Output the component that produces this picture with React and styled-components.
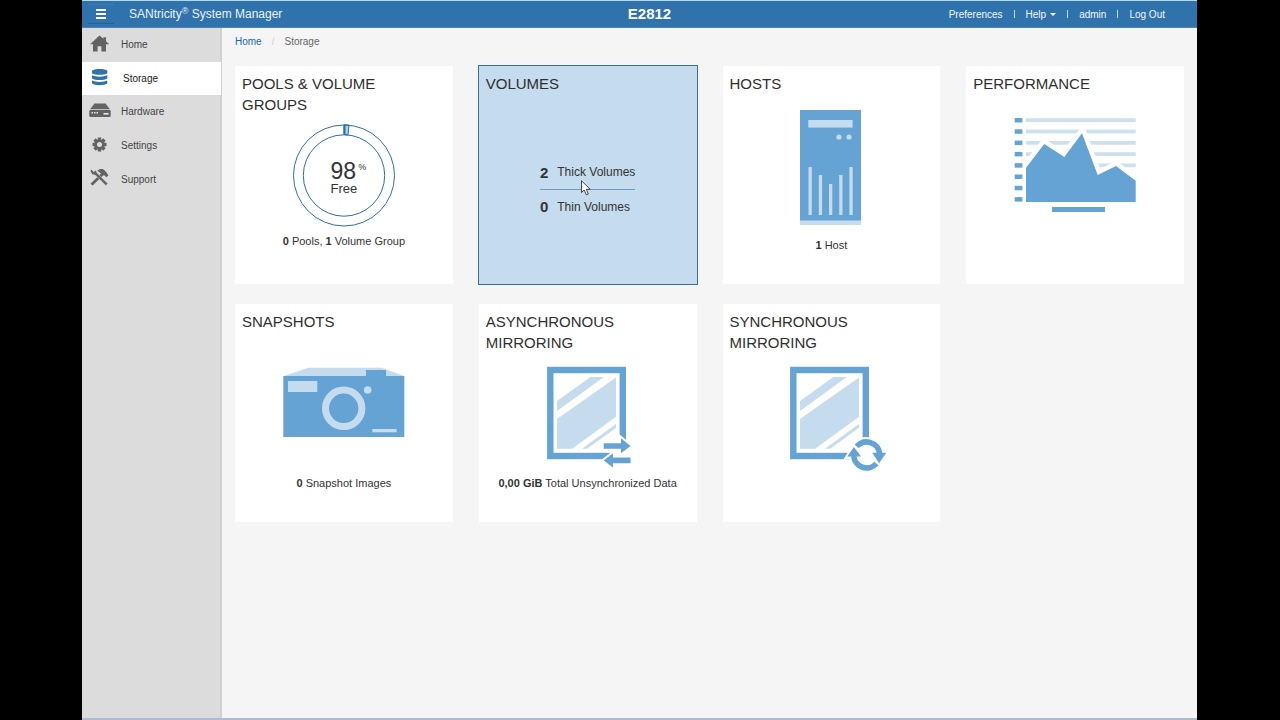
import React from "react";
import styled, { createGlobalStyle, css } from "styled-components";

const color = {
  header: "#3072ac",
  headerEdge: "#b4d8f0",
  side: "#dcdcdc",
  sideEdge: "#d0d0d0",
  page: "#f5f5f5",
  text: "#333333",
  icon: "#636363",
  link: "#2163b8",
  art: "#64a3d4",
  pale: "#c5dbee",
  line: "#2f6f9f",
};

const GlobalStyle = createGlobalStyle`
  *, *::before, *::after { box-sizing: border-box; }
  body {
    margin: 0;
    background: #000;
    color: ${color.text};
    font-family: "Liberation Sans", Arial, sans-serif;
    font-size: 11px;
  }
`;

const Shell = styled.div`
  min-height: 100vh;
  margin: 0 83px 0 82px;
  display: flex;
  flex-direction: column;
  background: ${color.page};
  border-bottom: 2px solid #a9bdd3;
`;

const Header = styled.header`
  height: 28px;
  display: grid;
  grid-template-columns: 1fr auto 1fr;
  align-items: center;
  background: ${color.header};
  border-top: 1px solid ${color.headerEdge};
  border-bottom: 1px solid #4a83b5;
  color: #fff;
`;

const Brand = styled.div`
  display: flex;
  align-items: center;
  gap: 15px;
  padding-left: 6px;
  font-size: 12px;
  white-space: nowrap;
  color: #eaf3fb;

  sup {
    font-size: 9px;
    line-height: 0;
    vertical-align: 4px;
  }
`;

const MenuButton = styled.button`
  width: 26px;
  height: 20px;
  padding: 0;
  display: grid;
  place-items: center;
  background: none;
  border: 0;
  border-top: 1px solid #3c7cb4;
  border-bottom: 1px solid #255f95;
`;

const SystemName = styled.h1`
  margin: 0;
  padding-left: 20px;
  font-size: 15px;
  line-height: 20px;
`;

const UserNav = styled.nav`
  display: flex;
  justify-content: flex-end;
  align-items: center;
  gap: 11px;
  padding-right: 32px;
`;

const headerItem = css`
  padding: 0;
  border: 0;
  background: none;
  font: inherit;
  font-size: 10px;
  color: #f0f7fd;
  text-decoration: none;
  white-space: nowrap;
`;

const HeaderLink = styled.a`
  ${headerItem}
`;

const HeaderButton = styled.button`
  ${headerItem}
  display: flex;
  align-items: center;
  gap: 4px;
`;

const Divider = styled.span`
  width: 1px;
  height: 8px;
  background: #c3dbf0;
`;

const Body = styled.div`
  flex: 1;
  display: flex;
`;

const Sidebar = styled.aside`
  flex: 0 0 140px;
  background: ${color.side};
  border-right: 2px solid ${color.sideEdge};
`;

const SideNav = styled.nav`
  height: 168px;
  margin-right: -1px;
  display: grid;
  grid-template-rows: repeat(5, 1fr);
`;

const SideLink = styled.a`
  display: flex;
  align-items: center;
  gap: ${(p) => (p.$active ? 12 : 10)}px;
  padding-left: 7px;
  font-size: 10px;
  text-decoration: none;
  color: ${(p) => (p.$active ? "#222" : "#444")};
  background: ${(p) => (p.$active ? "#fff" : "none")};

  svg {
    color: ${(p) => (p.$active ? color.header : color.icon)};
  }
`;

const Main = styled.main`
  flex: 1;
  min-width: 0;
  padding: 0 13px;
`;

const Crumbs = styled.nav`
  height: 38px;
  padding-bottom: 11px;
  display: flex;
  align-items: center;
  gap: 10px;
  font-size: 10px;
  color: #666;

  a {
    color: ${color.link};
    text-decoration: none;
  }

  i {
    color: #ccc;
    font-style: normal;
  }
`;

const Tiles = styled.div`
  display: grid;
  grid-template-columns: repeat(4, 1fr);
  grid-auto-rows: 218px;
  gap: 20px 26px;
`;

const Tile = styled.a`
  display: grid;
  grid-template-rows: auto 1fr 20px;
  justify-items: center;
  padding: 7px 7px ${(p) => (p.$raised ? 35 : 31)}px;
  background: ${(p) => (p.$selected ? color.pale : "#fff")};
  outline: ${(p) => (p.$selected ? "1px solid #3b6f9b" : "none")};
  color: inherit;
  text-decoration: none;
`;

const TileTitle = styled.h2`
  justify-self: start;
  max-width: 160px;
  margin: 0;
  font-size: 15px;
  font-weight: 400;
  line-height: 21px;
  color: #2f2f2f;
`;

const Art = styled.div`
  height: 0;
  align-self: end;
  display: flex;
  align-items: flex-end;
`;

const Caption = styled.p`
  align-self: end;
  margin: 0;
  font-size: 11px;
  line-height: 16px;
  white-space: nowrap;
`;

const Gauge = styled.div`
  display: grid;
  place-items: center;

  > * {
    grid-area: 1 / 1;
  }
`;

const GaugeLabel = styled.div`
  position: relative;
  margin-top: 4px;
  font-size: 13px;
  line-height: 14px;

  strong {
    display: block;
    font-size: 23px;
    font-weight: 400;
    line-height: 22px;
  }

  sup {
    position: absolute;
    top: 1px;
    left: 100%;
    margin-left: 1px;
    font-size: 9px;
    line-height: 12px;
  }
`;

const Counts = styled.ul`
  position: relative;
  margin: 0 0 10px;
  padding: 0;
  list-style: none;
`;

const Count = styled.li`
  height: 34px;
  display: flex;
  align-items: center;
  gap: 9px;
  font-size: 12px;
  white-space: nowrap;

  & + & {
    border-top: 1px solid #6f9cc6;
  }

  b {
    font-size: 15px;
  }
`;

const Pointer = styled.svg`
  position: absolute;
  left: 41px;
  top: 25px;
`;

const SideIcon = ({ children }) => (
  <svg width="22" height="22" viewBox="0 0 22 22" fill="currentColor" aria-hidden="true">
    {children}
  </svg>
);

const HomeIcon = () => (
  <SideIcon>
    <path d="M10.5 1.5 1 10.3h3V17.5h4.6v-5.3h3.8v5.3H17v-7.2h3.2L17 7.2V3.2h-2.6v1.6z" />
  </SideIcon>
);

const StorageIcon = () => (
  <SideIcon>
    <path d="M3 3.6C5 1.4 16.300 1.400 18.300 3.600V6.400C15 8.300 6.300 8.300 3 6.400z" />
    <path d="M3 8.300C6.300 10.200 15 10.200 18.300 8.300V11.600C15 13.600 6.300 13.600 3 11.600z" />
    <path d="M3 13.500C6.300 15.400 15 15.400 18.300 13.500V16.500C15 18.700 6.300 18.700 3 16.500z" />
  </SideIcon>
);

const HardwareIcon = () => (
  <SideIcon>
    <path d="M5.500 2.600h11L21 8.300H1z" />
    <rect x="0.300" y="9" width="21.400" height="7" rx="1.200" />
    <g fill="#e8e8e8">
      <rect x="2.500" y="11" width="1.500" height="1.500" />
      <rect x="5" y="11" width="1.500" height="1.500" />
      <rect x="7.500" y="11" width="1.500" height="1.500" />
      <rect x="14.500" y="12" width="5" height="1.600" />
    </g>
  </SideIcon>
);

const SettingsIcon = () => (
  <SideIcon>
    <g transform="translate(10.500 9.500)">
      {[0, 45, 90, 135].map((a) => (
        <rect key={a} x="-1.700" y="-7" width="3.400" height="14" transform={`rotate(${a})`} />
      ))}
      <circle r="5.300" />
      <circle r="2.500" fill={color.side} />
    </g>
  </SideIcon>
);

const SupportIcon = () => (
  <SideIcon>
    <path d="M1.500 15.800 12 5.600 10.500 4.200C9.500 3.300 8.800 3.200 8.200 3 10.500.6 13.800.6 15.500 2.300L17 3.900 19.500 7.200 17.400 9.300 15.300 7.300 14 7.600 3.600 17.600z" />
    <path d="M2.200 1.200 4.800 3.800 6.600 2 8.300 5.200 18.800 15.600 16.800 17.600 6.400 7.200 3.300 6.400 1.200 3.200z" stroke={color.side} strokeWidth="0.500" />
  </SideIcon>
);

const Drawing = ({ height, children }) => (
  <svg width="150" height={height} viewBox={`0 0 150 ${height}`} aria-hidden="true">
    {children}
  </svg>
);

const RingArt = () => (
  <Drawing height={106}>
    <path d="M75 1.800A50.700 50.700 0 0 1 80 2.050L79 11.900A41 41 0 0 0 75 11.500z" fill="#a9d2ea" stroke={color.line} />
    <path d="M75.500 2v9.500" stroke={color.line} strokeWidth="2" />
    <circle cx="75" cy="52.500" r="50.500" fill="none" stroke={color.line} />
    <circle cx="75" cy="52.500" r="40.700" fill="none" stroke={color.line} />
  </Drawing>
);

const HostArt = () => (
  <Drawing height={123}>
    <rect x="44" y="0" width="61" height="115" fill={color.pale} />
    <rect x="44" y="0" width="61" height="110.500" fill={color.art} />
    <g fill={color.pale}>
      <rect x="52.300" y="10" width="44.300" height="7.600" />
      <circle cx="83" cy="27" r="2.600" />
      <circle cx="93" cy="27" r="2.600" />
      <rect x="52.500" y="57" width="3.300" height="48" />
      <rect x="62.800" y="65" width="3.300" height="40" />
      <rect x="73" y="74" width="3.300" height="31" />
      <rect x="83.200" y="65" width="3.300" height="40" />
      <rect x="93.400" y="57" width="3.300" height="48" />
    </g>
  </Drawing>
);

const chartShape = "26,51.700 44.300,28 64.300,41 82,17.300 97.700,59 116,50 135.700,64.700 135.700,86 26,86";

const ChartArt = () => (
  <Drawing height={117}>
    {[0, 1, 2, 3, 4].map((i) => (
      <rect key={i} x="26" y={2.300 + i * 11.300} width="109.700" height="3.800" fill="#cde0ee" />
    ))}
    <polygon points={chartShape} fill="#fff" stroke="#fff" strokeWidth="9" />
    <polygon points={chartShape} fill={color.art} />
    {[0, 1, 2, 3, 4, 5, 6, 7].map((i) => (
      <rect key={i} x="14.700" y={2 + i * 11.300} width="7.700" height="4.500" fill={color.art} />
    ))}
    <rect x="52" y="91" width="53" height="5" fill={color.art} />
  </Drawing>
);

const CameraArt = () => (
  <Drawing height={105}>
    <polygon points="15,10 39.300,1.700 112.700,1.700 135,10" fill={color.pale} />
    <rect x="97" y="4" width="20" height="7" fill={color.art} />
    <rect x="14.300" y="10" width="121" height="61" fill={color.art} />
    <g fill={color.pale}>
      <rect x="19" y="15" width="29.300" height="11" />
      <circle cx="98.700" cy="24" r="3.800" />
      <rect x="103.300" y="63" width="24.400" height="3.300" />
    </g>
    <circle cx="74.700" cy="42.300" r="18.200" fill="none" stroke={color.pale} strokeWidth="7" />
  </Drawing>
);

const Mirror = () => (
  <>
    <rect x="37.300" y="4" width="72.500" height="86" fill="none" stroke={color.art} strokeWidth="6.400" />
    <g fill={color.pale}>
      <polygon points="44,35 77.400,11 90.700,11 44,45" />
      <polygon points="44,53 103,11.500 103,50.700 59,82.700 44,82.700" />
      <polygon points="103,58 103,61.700 74,82.700 69,82.700" />
    </g>
  </>
);

const swapArrows = (
  <>
    <path d="M90.700 77.300H108V72.300L117.500 80 108 87.300V82.700H90.700z" />
    <path d="M117.500 91.500H100V87.300L90.700 94.400 100 101.400V97.200H117.500z" />
  </>
);

const AsyncArt = () => (
  <Drawing height={105}>
    <Mirror />
    <rect x="98" y="82" width="20" height="12" fill="#fff" />
    <g fill="#fff" stroke="#fff" strokeWidth="4">
      {swapArrows}
    </g>
    <g fill={color.art}>{swapArrows}</g>
  </Drawing>
);

const SyncArt = () => (
  <Drawing height={105}>
    <Mirror />
    <g transform="translate(110.600 89)">
      <circle r="18" fill="#fff" />
      <path d="M-23 4-12.500-12-4 4z" fill="#fff" />
      <g fill="none" stroke={color.art} strokeWidth="5.600">
        <path d="M-9.800-8.500A13 13 0 0 1 12.900-1.500" />
        <path d="M9.800 8.500A13 13 0 0 1-12.900 1" />
      </g>
      <g fill={color.art}>
        <path d="M5.500-2.300H19.700L12.500 8.300z" />
        <path d="M-19.300 1.500H-5.500L-12.700-8z" />
      </g>
    </g>
  </Drawing>
);

const sections = [
  { name: "Home", Icon: HomeIcon },
  { name: "Storage", Icon: StorageIcon, active: true },
  { name: "Hardware", Icon: HardwareIcon },
  { name: "Settings", Icon: SettingsIcon },
  { name: "Support", Icon: SupportIcon },
];

const StorageTile = ({ title, art, caption, ...rest }) => (
  <Tile href="#" {...rest}>
    <TileTitle>{title}</TileTitle>
    <Art>{art}</Art>
    {caption && <Caption>{caption}</Caption>}
  </Tile>
);

export default function App() {
  return (
    <>
      <GlobalStyle />
      <Shell>
        <Header>
          <Brand>
            <MenuButton aria-label="Menu">
              <svg width="10" height="10" viewBox="0 0 10 10" fill="#fff" aria-hidden="true">
                <path d="M0 0h10v2H0zM0 4h10v2H0zM0 8h10v2H0z" />
              </svg>
            </MenuButton>
            <span>
              SANtricity<sup>®</sup> System Manager
            </span>
          </Brand>
          <SystemName>E2812</SystemName>
          <UserNav aria-label="User">
            <HeaderLink href="#">Preferences</HeaderLink>
            <Divider />
            <HeaderButton>
              Help
              <svg width="6" height="3" viewBox="0 0 6 3" fill="#fff" aria-hidden="true">
                <path d="M0 0h6L3 3z" />
              </svg>
            </HeaderButton>
            <Divider />
            <HeaderLink href="#">admin</HeaderLink>
            <Divider />
            <HeaderLink href="#">Log Out</HeaderLink>
          </UserNav>
        </Header>
        <Body>
          <Sidebar>
            <SideNav aria-label="Sections">
              {sections.map(({ name, Icon, active }) => (
                <SideLink key={name} href="#" $active={active}>
                  <Icon />
                  {name}
                </SideLink>
              ))}
            </SideNav>
          </Sidebar>
          <Main>
            <Crumbs aria-label="Breadcrumb">
              <a href="#">Home</a>
              <i>/</i>
              <span>Storage</span>
            </Crumbs>
            <Tiles>
              <StorageTile
                $raised
                title="POOLS & VOLUME GROUPS"
                art={
                  <Gauge>
                    <RingArt />
                    <GaugeLabel>
                      <strong>98</strong>
                      <sup>%</sup>
                      Free
                    </GaugeLabel>
                  </Gauge>
                }
                caption={<><b>0</b> Pools, <b>1</b> Volume Group</>}
              />
              <StorageTile
                $selected
                title="VOLUMES"
                art={
                  <Counts>
                    <Count><b>2</b>Thick Volumes</Count>
                    <Count><b>0</b>Thin Volumes</Count>
                    <Pointer width="10" height="16" viewBox="0 0 10 16" aria-hidden="true">
                      <path d="M.500.800V12.500L3.200 10 5.300 14.800 7.300 14 5.300 9.300H9.200z" fill="#fff" stroke="#333" strokeWidth="0.900" />
                    </Pointer>
                  </Counts>
                }
              />
              <StorageTile title="HOSTS" art={<HostArt />} caption={<><b>1</b> Host</>} />
              <StorageTile title="PERFORMANCE" art={<ChartArt />} />
              <StorageTile title="SNAPSHOTS" art={<CameraArt />} caption={<><b>0</b> Snapshot Images</>} />
              <StorageTile
                title="ASYNCHRONOUS MIRRORING"
                art={<AsyncArt />}
                caption={<><b>0,00 GiB</b> Total Unsynchronized Data</>}
              />
              <StorageTile title="SYNCHRONOUS MIRRORING" art={<SyncArt />} />
            </Tiles>
          </Main>
        </Body>
      </Shell>
    </>
  );
}
